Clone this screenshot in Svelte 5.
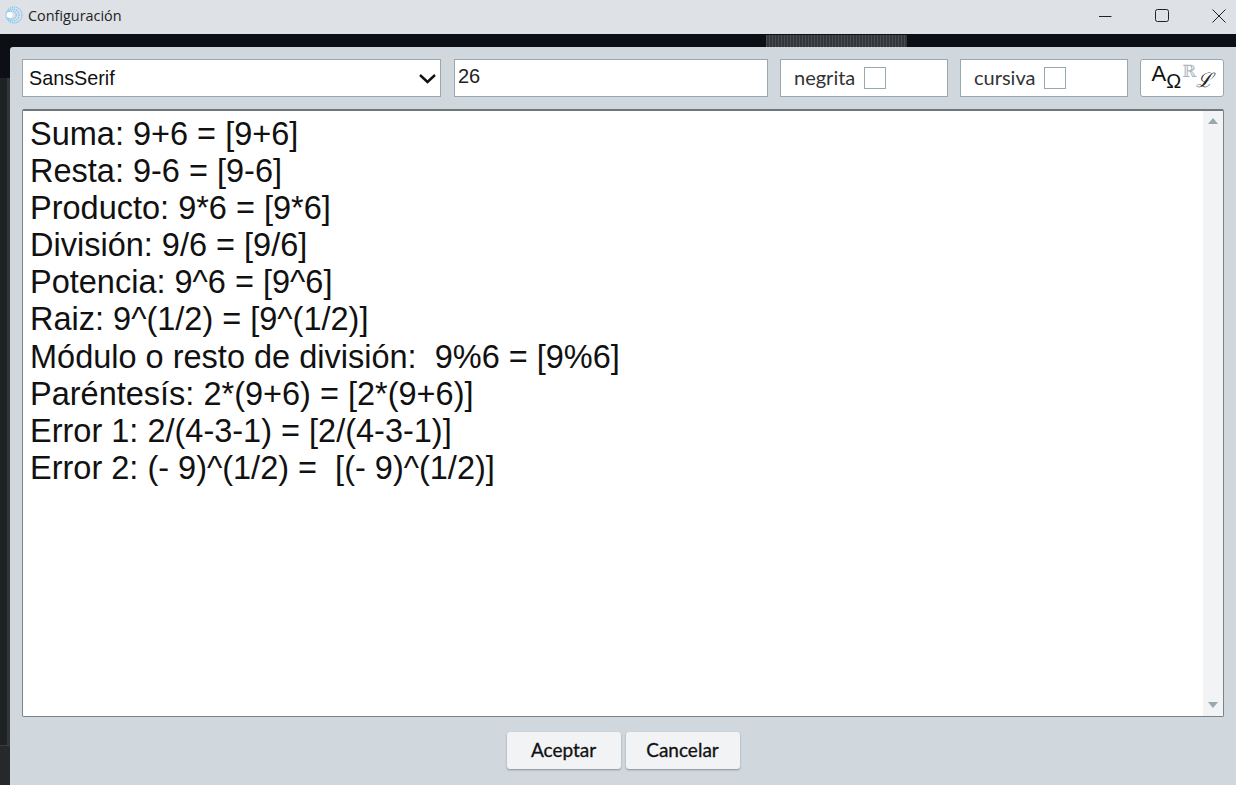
<script>
  const lines = [
    'Suma: 9+6 = [9+6]',
    'Resta: 9-6 = [9-6]',
    'Producto: 9*6 = [9*6]',
    'División: 9/6 = [9/6]',
    'Potencia: 9^6 = [9^6]',
    'Raiz: 9^(1/2) = [9^(1/2)]',
    'Módulo o resto de división:  9%6 = [9%6]',
    'Paréntesís: 2*(9+6) = [2*(9+6)]',
    'Error 1: 2/(4-3-1) = [2/(4-3-1)]',
    'Error 2: (- 9)^(1/2) =  [(- 9)^(1/2)]'
  ];
</script>

<div class="window">
  <header class="titlebar">
    <svg class="appicon" width="20" height="20" viewBox="0 0 20 20" fill="none" stroke="#7cc8f4">
      <circle cx="11" cy="10" r="8" stroke-width="1.2" stroke-dasharray="1.4 0.8"/>
      <circle cx="10" cy="10" r="6" stroke-width="1.2" stroke-dasharray="1.4 0.8"/>
      <circle cx="9" cy="10" r="4.2" stroke-width="1.2" stroke-dasharray="1.4 0.6"/>
      <circle cx="6.5" cy="10" r="3" fill="#fff" stroke="none"/>
    </svg>
    <span class="title">Configuración</span>
    <div class="controls">
      <svg width="14" height="14" viewBox="0 0 14 14"><path d="M1 7.5h12.5" stroke="#222" fill="none"/></svg>
      <svg width="14" height="14" viewBox="0 0 14 14"><rect x="0.5" y="0.5" width="13" height="12" rx="2" stroke="#222" fill="none"/></svg>
      <svg width="14" height="14" viewBox="0 0 14 14"><path d="M.5.5l13 13M13.5.5l-13 13" stroke="#222" fill="none"/></svg>
    </div>
  </header>
  <div class="backdrop">
    <div class="ghost"></div>
    <div class="strip"></div>
    <div class="strip-foot"></div>
    <main class="dialog">
      <div class="toolbar">
        <div class="field select"><span>SansSerif</span>
          <svg width="18" height="11" viewBox="0 0 18 11"><path d="M1 2l7.5 7 7.5-7" stroke="#111" stroke-width="2.4" fill="none"/></svg>
        </div>
        <div class="field size">26</div>
        <div class="field check"><span>negrita</span><i class="box"></i></div>
        <div class="field check"><span>cursiva</span><i class="box"></i></div>
        <button class="symbols"><span class="a">A</span><span class="o">Ω</span><span class="r">ℝ</span><span class="l">ℒ</span></button>
      </div>
      <div class="editor">
        <div class="text">
          {#each lines as l}<div class="line">{l}</div>{/each}
        </div>
        <div class="scroll">
          <i class="up"></i>
          <i class="down"></i>
        </div>
      </div>
      <footer class="actions">
        <button class="btn">Aceptar</button>
        <button class="btn">Cancelar</button>
      </footer>
    </main>
  </div>
</div>

<style>
  :global(body) { margin: 0; overflow: hidden; }
  .window { width: 1236px; height: 785px; display: flex; flex-direction: column; font-family: Lato, sans-serif; }
  .titlebar { height: 34px; flex: none; background: #dee1e6; display: flex; align-items: center; padding-left: 3px; box-sizing: border-box; }
  .appicon { flex: none; margin-top: -4px; }
  .title { margin-left: 5px; font: 14.4px "Open Sans", sans-serif; color: #222; margin-top: -3px; }
  .controls { margin-left: auto; display: flex; align-items: center; gap: 43px; margin-right: 10px; margin-top: -3px; }
  .backdrop { flex: 1; position: relative; background: #0c1014; padding: 13px 0 0 10px; display: flex; min-height: 0; }
  .ghost { position: absolute; left: 766px; top: 1px; width: 141px; height: 12px; background: #3a3c3f repeating-linear-gradient(90deg, #4a4c4f 0 1px, #343639 1px 3px); }
  .strip { position: absolute; left: 0; top: 44px; width: 7px; height: 667px; background: #1d2225; border-right: 3px solid #32353a; }
  .strip-foot { position: absolute; left: 0; top: 711px; width: 10px; height: 40px; background: #26292c; border-top: 1px solid #3a3d40; box-sizing: border-box; }
  .dialog { flex: 1; position: relative; background: #d0d8de; border-top-left-radius: 3px; padding: 12px 12px 0; display: flex; flex-direction: column; }
  .toolbar { display: flex; gap: 12px; height: 38px; flex: none; }
  .field { box-sizing: border-box; height: 38px; background: #fff; border: 1px solid #98a8b0; display: flex; align-items: center; }
  .select { width: 419px; padding: 0 3px 0 6px; justify-content: space-between; font: 19.8px "Liberation Sans", sans-serif; color: #111; margin-right: 1px; }
  .size { width: 314px; padding: 0 0 3px 3px; font: 20px "Liberation Sans", sans-serif; color: #222; }
  .check { width: 168px; padding-left: 13px; font-size: 20px; color: #333; gap: 9px; }
  .check span { margin-top: -2px; }
  .box { display: block; width: 22px; height: 22px; box-sizing: border-box; border: 1px solid #98a8b0; background: #fff; }
  .symbols { width: 84px; height: 38px; box-sizing: border-box; padding: 0 0 0 1px; background: #fff; border: 1px solid #98a8b0; border-radius: 3px; display: flex; justify-content: center; align-items: flex-start; font-family: "Liberation Serif", serif; }
  .a { font: 22px/22px "Liberation Sans", sans-serif; color: #111; margin-top: 3px; }
  .o { font: 20px/20px "Liberation Sans", sans-serif; color: #111; margin-top: 11px; }
  .r { font: 17px/17px "DejaVu Serif", serif; color: #a8b4bc; margin: 3px 0 0 1px; }
  .l { font: italic 20px/20px "DejaVu Serif", serif; color: #222; margin-top: 10px; }
  .editor { margin-top: 12px; height: 608px; flex: none; box-sizing: border-box; background: #fff; border: 1px solid #78848a; border-top: 2px solid #6e777c; border-radius: 2px; display: flex; }
  .text { flex: 1; padding: 5px 7px; font: 32.5px/37px "Liberation Sans", sans-serif; color: #111; white-space: pre; }
  .line { height: 37.1px; }
  .scroll { width: 20px; background: #f1f3f4; position: relative; }
  .up, .down { position: absolute; left: 5px; width: 0; height: 0; border-left: 5px solid transparent; border-right: 5px solid transparent; }
  .up { top: 7px; border-bottom: 6px solid #98a8b0; }
  .down { bottom: 8px; border-top: 6px solid #98a8b0; }
  .actions { display: flex; justify-content: center; gap: 5px; margin-top: 15px; }
  .btn { width: 114px; height: 37px; padding: 0 0 3px; background: #f1f3f4; border: 0; border-radius: 3px; box-shadow: 0 1px 2px rgba(0,0,0,.35); font: 400 19px Lato, sans-serif; -webkit-text-stroke: 0.3px #111; color: #111; }
</style>
